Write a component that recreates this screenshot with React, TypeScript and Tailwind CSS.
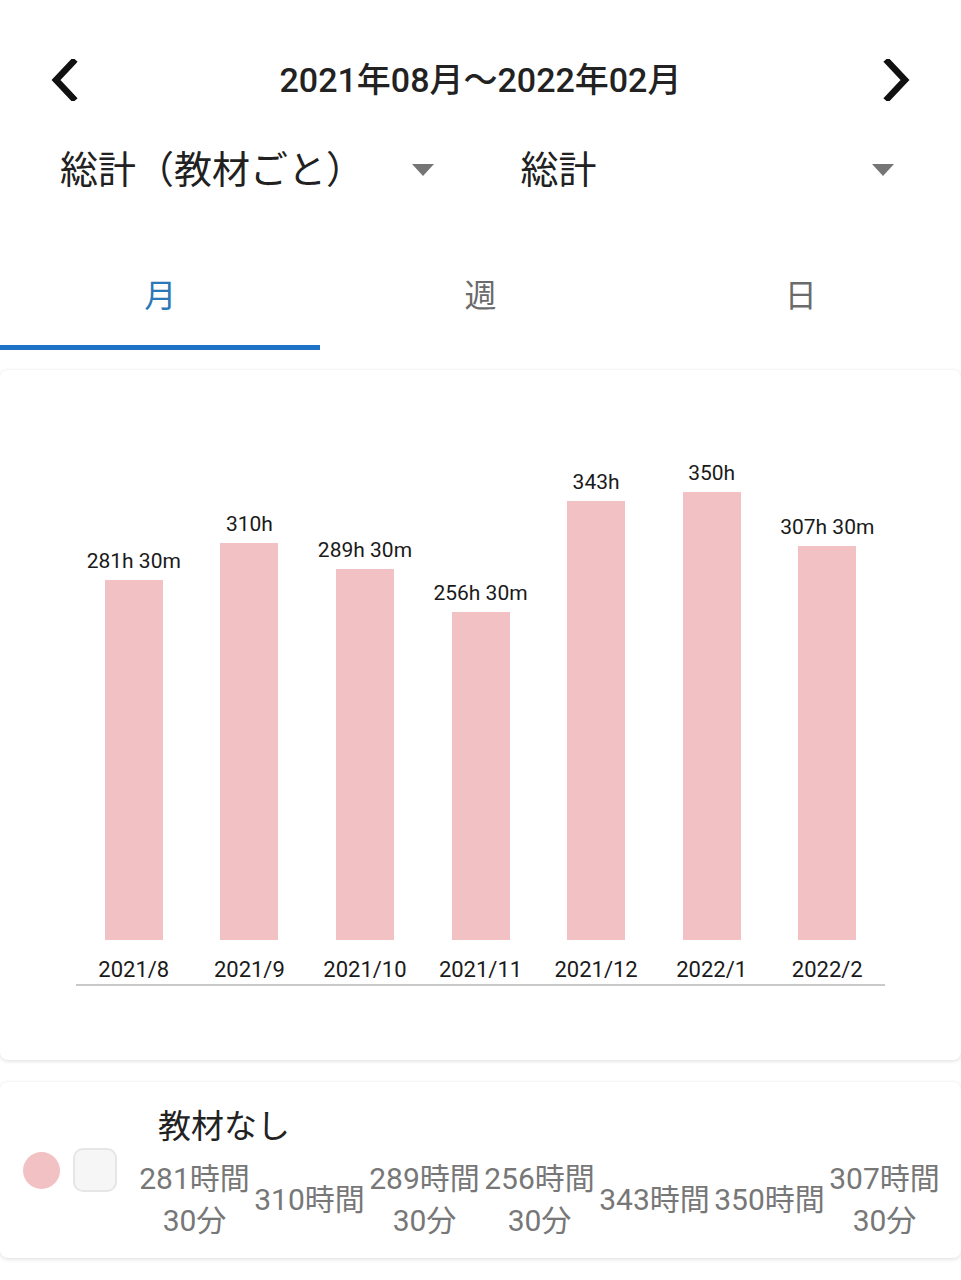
const bars = [
  { month: '2021/8', label: '281h 30m', hours: 281.5, h: '281時間', m: '30分' },
  { month: '2021/9', label: '310h', hours: 310, h: '310時間', m: '' },
  { month: '2021/10', label: '289h 30m', hours: 289.5, h: '289時間', m: '30分' },
  { month: '2021/11', label: '256h 30m', hours: 256.5, h: '256時間', m: '30分' },
  { month: '2021/12', label: '343h', hours: 343, h: '343時間', m: '' },
  { month: '2022/1', label: '350h', hours: 350, h: '350時間', m: '' },
  { month: '2022/2', label: '307h 30m', hours: 307.5, h: '307時間', m: '30分' },
]

const font = { fontFamily: "Roboto, 'Noto Sans CJK JP', sans-serif" }

function Chevron({ dir }: { dir: 'left' | 'right' }) {
  return (
    <svg width="30" height="42" viewBox="0 0 30 42" fill="none">
      <polyline
        points={dir === 'left' ? '24,3 7,21 24,39' : '6,3 23,21 6,39'}
        stroke="#111"
        strokeWidth="6.5"
        strokeLinecap="square"
      />
    </svg>
  )
}

function Caret() {
  return (
    <svg width="22" height="12" viewBox="0 0 22 12">
      <polygon points="0,0 22,0 11,12" fill="#757575" />
    </svg>
  )
}

function App() {
  return (
    <div className="w-[961px] min-h-[1280px] bg-white text-[#212121]" style={font}>
      <div className="h-[140px] pt-[20px] px-[49px] flex items-center justify-between">
        <Chevron dir="left" />
        <span className="text-[34px] font-medium text-[#222]">2021年08月～2022年02月</span>
        <Chevron dir="right" />
      </div>

      <div className="h-[60px] px-[60px] flex gap-[80px]">
        <div className="flex-1 flex items-center justify-between pr-[7px]">
          <span className="text-[38px]">総計（教材ごと）</span>
          <Caret />
        </div>
        <div className="flex-1 flex items-center justify-between pr-[7px]">
          <span className="text-[38px]">総計</span>
          <Caret />
        </div>
      </div>

      <div className="mt-[40px] flex">
        <div className="flex-1 h-[110px] pt-[6px] flex items-center justify-center border-b-[5px] border-[#1f73c6] text-[32px] text-[#2a78b8]">月</div>
        <div className="flex-1 h-[110px] pt-[6px] flex items-center justify-center border-b-[5px] border-transparent text-[32px] text-[#6b6b6b]">週</div>
        <div className="flex-1 h-[110px] pt-[6px] flex items-center justify-center border-b-[5px] border-transparent text-[32px] text-[#6b6b6b]">日</div>
      </div>

      <div className="mt-[20px] h-[690px] bg-white rounded-[8px] shadow-[0_1px_4px_rgba(0,0,0,0.14)] px-[76px]">
        <div className="h-[570px] flex items-end">
          {bars.map((b) => (
            <div key={b.month} className="flex-1 flex flex-col items-center justify-end">
              <span className="text-[21px] leading-[24px] text-[#1a1a1a] mb-[7px] whitespace-nowrap">{b.label}</span>
              <div className="w-[58px] bg-[#f2c1c3]" style={{ height: `${(b.hours / 350) * 448}px` }} />
            </div>
          ))}
        </div>
        <div className="h-[46px] flex pt-[16px] border-b-2 border-[#c9c9c9]">
          {bars.map((b) => (
            <div key={b.month} className="flex-1 text-center text-[22px] leading-[28px] text-[#1a1a1a]">{b.month}</div>
          ))}
        </div>
      </div>

      <div className="mt-[22px] h-[176px] bg-white rounded-[8px] shadow-[0_1px_4px_rgba(0,0,0,0.14)] pt-[25px]">
        <div className="pl-[158px] text-[33px] leading-[40px] text-[#222]">教材なし</div>
        <div className="mt-px flex items-start">
          <div className="h-[44px] flex items-center">
            <div className="ml-[23px] w-[37px] h-[37px] rounded-full bg-[#f2c1c3]" />
            <div className="ml-[13px] w-[44px] h-[44px] rounded-[10px] bg-[#f6f6f6] border-2 border-[#e6e6e6]" />
          </div>
          <div className="ml-[20px] mt-[10px] h-[84px] flex items-center">
            {bars.map((b) => (
              <div key={b.month} className="w-[115px] text-center text-[30px] leading-[42px] text-[#777] whitespace-nowrap">
                <div>{b.h}</div>
                {b.m && <div>{b.m}</div>}
              </div>
            ))}
          </div>
        </div>
      </div>
    </div>
  )
}

export default App
